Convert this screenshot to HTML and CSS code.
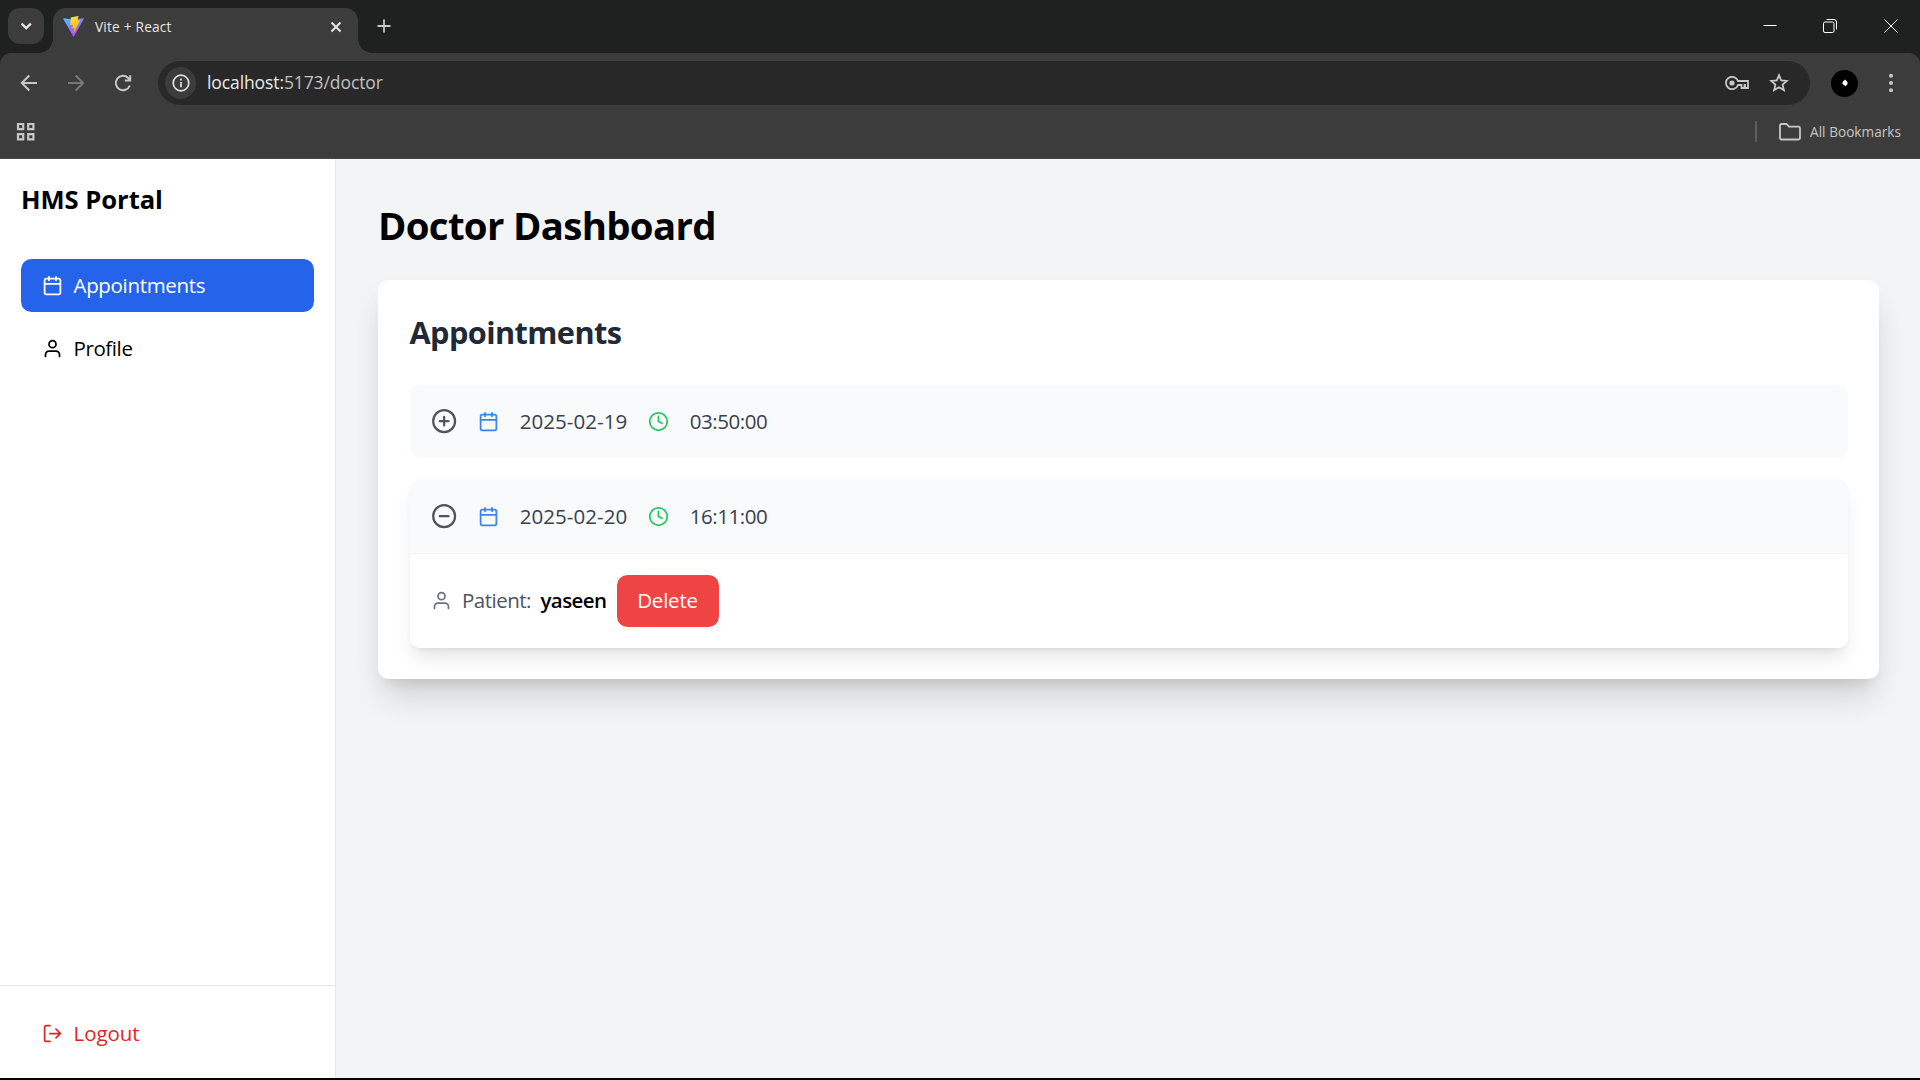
FILE: index.html
```html
<!DOCTYPE html>
<html lang="en">
<head>
<meta charset="utf-8">
<title>Vite + React</title>
<link rel="stylesheet" href="styles.css">
</head>
<body>
<svg class="sprite" aria-hidden="true">
  <symbol id="calendar" viewBox="0 0 24 24"><rect x="3" y="4" width="18" height="18" rx="2"/><path d="M16 2v4M8 2v4M3 10h18"/></symbol>
  <symbol id="user" viewBox="0 0 24 24"><path d="M20 21v-2a4 4 0 0 0-4-4H8a4 4 0 0 0-4 4v2"/><circle cx="12" cy="7" r="4"/></symbol>
  <symbol id="clock" viewBox="0 0 24 24"><circle cx="12" cy="12" r="10"/><path d="M12 6v6l4 2"/></symbol>
</svg>
<div class="browser">
  <header class="tabstrip">
    <div class="tab-search"><svg width="14" height="10" viewBox="0 0 14 10"><path d="M2.500 2.700 7.200 7.200l4.700-4.500"/></svg></div>
    <div class="tab">
      <svg class="vite" viewBox="0 0 32 32">
        <defs>
          <linearGradient id="va" x1="0" y1="0" x2=".6" y2="1"><stop offset="0" stop-color="#41d1ff"/><stop offset="1" stop-color="#bd34fe"/></linearGradient>
          <linearGradient id="vb" x1=".4" y1="0" x2=".6" y2="1"><stop offset="0" stop-color="#ffea83"/><stop offset=".1" stop-color="#ffdd35"/><stop offset="1" stop-color="#ffa800"/></linearGradient>
        </defs>
        <path fill="url(#va)" d="M31.600 4.700 17 30.800a.9.9 0 0 1-1.600 0L.500 4.700a.9.9 0 0 1 1-1.400l14.600 2.600 14.500-2.600a.9.9 0 0 1 1 1.400z"/>
        <path fill="url(#vb)" d="m22.900.100-10.800 2.100a.4.4 0 0 0-.3.400l-.7 11.200c0 .3.200.500.500.400l3-.7c.3 0 .5.200.5.500l-.9 4.400c-.1.300.2.500.5.400l1.900-.5c.3-.1.500.2.500.4l-1.400 6.900c-.1.400.5.700.7.300l9.500-18.700c.2-.3-.1-.6-.4-.6l-3.100.6c-.3.100-.5-.2-.5-.5l2-7c.1-.3-.2-.6-.5-.5z"/>
      </svg>
      <span class="tab-title">Vite + React</span>
      <svg class="tab-close" width="12" height="12" viewBox="0 0 12 12"><path d="m1.500 1.500 9 9m0-9-9 9"/></svg>
    </div>
    <svg class="new-tab" width="14" height="14" viewBox="0 0 14 14"><path d="M7 .5v13M.5 7h13"/></svg>
    <div class="window-controls">
      <svg width="14" height="14" viewBox="0 0 14 14"><path d="M.5 6.500h13"/></svg>
      <svg width="14" height="14" viewBox="0 0 14 14"><rect x=".5" y="3" width="10.500" height="10.500" rx="1.500"/><path d="M3.500.500h7.500a2.500 2.500 0 0 1 2.500 2.500v7.500"/></svg>
      <svg width="14" height="14" viewBox="0 0 14 14"><path d="m.5.500 13 13m0-13-13 13"/></svg>
    </div>
  </header>
  <div class="toolbar">
    <div class="nav-buttons">
      <svg width="20" height="20" viewBox="0 0 20 20"><path d="M18 10H3.200M10.300 2.500 2.800 10l7.500 7.500"/></svg>
      <svg class="disabled" width="20" height="20" viewBox="0 0 20 20"><path d="M2 10h14.800M9.700 2.500l7.500 7.500-7.500 7.500"/></svg>
      <svg width="20" height="20" viewBox="0 0 20 20"><path d="M16.800 12.500A7.200 7.200 0 1 1 15.200 5l1.600 1.800"/><path d="M17.200 2.200v5.400h-5.400"/></svg>
    </div>
    <div class="address">
      <div class="site-info"><svg width="18" height="18" viewBox="0 0 18 18"><circle cx="9" cy="9" r="7.800"/><path d="M9 8v5.200M9 4.600v2"/></svg></div>
      <span class="url">localhost:<span class="path">5173/doctor</span></span>
      <svg class="key" width="24" height="14" viewBox="0 0 24 14"><path d="M13 5a6.200 6.200 0 1 0 0 4h3.500v3h3v-3h.500v3h3V5z"/><circle class="fill" cx="7" cy="7" r="2.600"/></svg>
      <svg class="star" width="20" height="20" viewBox="0 0 20 20"><path d="m10 2.200 2.200 5.200 5.700.5-4.300 3.700 1.300 5.500-4.900-2.900-4.900 2.900 1.300-5.500-4.300-3.700 5.700-.5z"/></svg>
    </div>
    <div class="avatar"><svg width="6" height="8" viewBox="0 0 6 8"><path d="M3 .5 5.500 3v2L3.500 7.200.5 5V3z"/></svg></div>
    <svg class="menu" width="4" height="20" viewBox="0 0 4 20"><circle cx="2" cy="2.800" r="2"/><circle cx="2" cy="10" r="2"/><circle cx="2" cy="17.200" r="2"/></svg>
  </div>
  <div class="bookmarks">
    <svg class="apps" width="20" height="20" viewBox="0 0 20 20"><path d="M2 2h5.200v5.200H2zM12.200 2h5.200v5.200h-5.200zM2 12.200h5.200v5.200H2zM12.200 12.200h5.200v5.200h-5.200z"/></svg>
    <span class="divider"></span>
    <svg class="folder" width="22" height="18" viewBox="0 0 22 18"><path d="M1 2.500A1.500 1.500 0 0 1 2.500 1h5l2.500 2.700h9.500A1.500 1.500 0 0 1 21 5.200v9.800a1.500 1.500 0 0 1-1.500 1.500h-17A1.500 1.500 0 0 1 1 15z"/></svg>
    <span class="all">All Bookmarks</span>
  </div>
</div>
<div class="app">
  <aside class="sidebar">
    <div class="sidebar-top">
      <h1 class="brand">HMS Portal</h1>
      <nav class="nav">
        <a class="nav-item active"><svg class="icon"><use href="#calendar"/></svg><span class="t-nav">Appointments</span></a>
        <a class="nav-item"><svg class="icon"><use href="#user"/></svg><span class="t-profile">Profile</span></a>
      </nav>
    </div>
    <div class="sidebar-foot">
      <a class="nav-item logout"><svg class="icon" viewBox="0 0 24 24"><path d="M9 21H5a2 2 0 0 1-2-2V5a2 2 0 0 1 2-2h4M16 17l5-5-5-5M21 12H9"/></svg><span class="t-logout">Logout</span></a>
    </div>
  </aside>
  <main class="main">
    <h1 class="title">Doctor Dashboard</h1>
    <section class="card">
      <h2 class="card-title">Appointments</h2>
      <div class="list">
        <article class="item">
          <div class="item-head">
            <svg class="icon toggle" viewBox="0 0 24 24"><circle cx="12" cy="12" r="10"/><path d="M8 12h8M12 8v8"/></svg>
            <svg class="icon blue"><use href="#calendar"/></svg><span class="date">2025-02-19</span>
            <svg class="icon green"><use href="#clock"/></svg><span class="time">03:50:00</span>
          </div>
        </article>
        <article class="item open">
          <div class="item-head">
            <svg class="icon toggle" viewBox="0 0 24 24"><circle cx="12" cy="12" r="10"/><path d="M8 12h8"/></svg>
            <svg class="icon blue"><use href="#calendar"/></svg><span class="date">2025-02-20</span>
            <svg class="icon green"><use href="#clock"/></svg><span class="time">16:11:00</span>
          </div>
          <div class="item-body">
            <svg class="icon gray"><use href="#user"/></svg><span class="label">Patient:</span><span class="name">yaseen</span><button class="delete">Delete</button>
          </div>
        </article>
      </div>
    </section>
  </main>
</div>
<div class="taskbar-edge"></div>
</body>
</html>
```
FILE: styles.css
```css
* { box-sizing: border-box; margin: 0; padding: 0; }
html, body { height: 1080px; overflow: hidden; }
body {
  display: flex;
  flex-direction: column;
  font-family: "Segoe UI", "Open Sans", "Noto Sans", sans-serif;
  font-size: 20.5px;
  line-height: 31.5px;
  color: #000;
  background: #f3f4f6;
}
svg { display: block; flex: none; fill: none; stroke: currentColor; }
.sprite { position: absolute; width: 0; height: 0; }
span, h1, h2 { white-space: nowrap; }

/* Browser window */
.browser { flex: none; height: 159px; background: #1f2120; color: #c7c7c7; }
.tabstrip { display: flex; height: 53px; padding: 8px 0 0 8px; color: #e6e6e6; }
.tab-search {
  display: flex; align-items: center; justify-content: center;
  width: 36px; height: 36px; margin-right: 9px; border-radius: 12px; background: #3c3c3c;
}
.tab-search svg { stroke-width: 2.400; }
.tab {
  position: relative; display: flex; align-items: center;
  width: 305px; height: 45px; padding: 0 16px 8px 10px;
  border-radius: 13px 13px 0 0; background: #3c3c3c;
}
.tab::before, .tab::after { content: ""; position: absolute; bottom: 0; width: 14px; height: 14px; }
.tab::before { left: -14px; background: radial-gradient(circle at 0 0, transparent 13.500px, #3c3c3c 14px); }
.tab::after { right: -14px; background: radial-gradient(circle at 100% 0, transparent 13.500px, #3c3c3c 14px); }
.vite { width: 21px; height: 21px; stroke: none; }
.tab-title { flex: 1; margin-left: 11px; padding-top: 1px; font-size: 13.700px; letter-spacing: .2px; }
.tab-close { stroke-width: 2; }
.new-tab { margin: 11px 0 0 18.500px; color: #c7c7c7; stroke-width: 1.800; }
.window-controls { display: flex; gap: 46.500px; margin: 11px 22.500px 0 auto; color: #fff; }
.toolbar {
  display: flex; align-items: center; height: 59px; padding: 0 27px 0 19px;
  border-radius: 11px 11px 0 0; background: #3c3c3c;
}
.nav-buttons { display: flex; gap: 27px; margin-right: 25px; stroke-width: 2; }
.nav-buttons .disabled { color: #777; }
.address {
  display: flex; align-items: center; flex: 1; height: 44px; padding: 0 21px 0 7px;
  border-radius: 22px; background: #282828;
}
.site-info {
  display: flex; align-items: center; justify-content: center;
  width: 31px; height: 32px; border-radius: 50%; background: #3c3c3c; color: #e3e3e3;
}
.site-info svg { stroke-width: 1.700; }
.url { flex: 1; margin-left: 11px; padding-top: 1px; font-size: 17.500px; letter-spacing: -.1px; color: #e8e8e8; }
.path { color: #c0c0c0; }
.key { margin-right: 20px; stroke-width: 1.800; }
.key .fill { fill: currentColor; stroke: none; }
.star { stroke-width: 1.800; }
.avatar {
  display: flex; align-items: center; justify-content: center;
  width: 27px; height: 27px; margin: 1px 31px 0 21px; border-radius: 50%; background: #000;
}
.avatar svg { fill: #fff; stroke: none; }
.menu { fill: currentColor; stroke: none; }
.bookmarks {
  display: flex; align-items: center; height: 47px; padding: 0 19px 7px 16px;
  background: #3c3c3c; border-bottom: 1px solid #464646;
}
.apps { stroke-width: 2.200; }
.divider { width: 2px; height: 21px; margin: 0 22px 0 auto; border-radius: 1px; background: #5e5e5e; }
.folder { margin-right: 9px; stroke-width: 1.800; }
.all { padding-top: 1px; font-size: 13.600px; letter-spacing: .03px; }

/* Portal */
.app { display: flex; flex: 1; min-height: 0; }
.icon { width: 21px; height: 21px; stroke-width: 2; stroke-linecap: round; stroke-linejoin: round; }
.sidebar {
  display: flex; flex-direction: column; flex: none;
  width: 336px; background: #fff; border-right: 1px solid #e5e7eb;
}
.sidebar-top { flex: 1; padding: 21px; }
.brand { font-size: 25.600px; line-height: 37px; letter-spacing: -.05px; padding-top: 1px; margin-bottom: 41px; }
.nav { display: flex; flex-direction: column; gap: 10.500px; }
.nav-item {
  display: flex; align-items: center; gap: 10.500px;
  height: 52.500px; padding: 0 21px; border-radius: 10.500px;
}
.nav-item span { padding-top: 1px; }
.nav-item.active { color: #fff; background: #2563eb; }
.t-nav { letter-spacing: -.32px; }
.t-profile { letter-spacing: -.4px; }
.sidebar-foot { height: 93px; padding: 21px; border-top: 1px solid #e5e7eb; }
.logout { color: #dc2626; }
.t-logout { letter-spacing: -.05px; }
.main { flex: 1; padding: 42px 41px 42px 42px; }
.title { font-size: 38.400px; line-height: 47.250px; letter-spacing: -.68px; padding-top: 1px; margin-bottom: 30.500px; }
.card {
  padding: 31.500px; border-radius: 10.500px; background: #fff;
  box-shadow: 0 26px 33px -6.500px rgba(0,0,0,.1), 0 10.500px 13px -8px rgba(0,0,0,.1), 0 10px 33px -4px rgba(0,0,0,.06);
}
.card-title { font-size: 30.700px; line-height: 42px; letter-spacing: -.58px; color: #1f2937; margin-bottom: 31.500px; }
.list { display: flex; flex-direction: column; gap: 21px; }
.item { border-radius: 10.500px; overflow: hidden; }
.item.open { box-shadow: 0 13px 20px -4px rgba(0,0,0,.1), 0 5px 8px -5px rgba(0,0,0,.1); }
.item-head {
  display: flex; align-items: center; gap: 21px;
  height: 73.500px; padding: 0 21px; background: #f9fafb; color: #374151;
}
.item-head span { padding-top: 1px; }
.toggle { width: 26.250px; height: 26.250px; color: #4b5563; }
.blue { color: #3b82f6; }
.green { color: #22c55e; }
.gray { color: #6b7280; }
.date { width: 107px; letter-spacing: .05px; }
.time { letter-spacing: -.45px; }
.item-body {
  display: flex; align-items: center; gap: 10.500px; padding: 21px;
  border-top: 1px solid #f3f4f6; background: #fff;
}
.label { width: 68px; color: #4b5563; letter-spacing: -.5px; }
.name { width: 65.500px; font-weight: 600; letter-spacing: -.6px; }
.delete {
  width: 102px; height: 52px; border: 0; border-radius: 10.500px;
  font: inherit; letter-spacing: -.2px; color: #fff; background: #ef4444;
}
.taskbar-edge { flex: none; height: 2px; background: #000; }
```
